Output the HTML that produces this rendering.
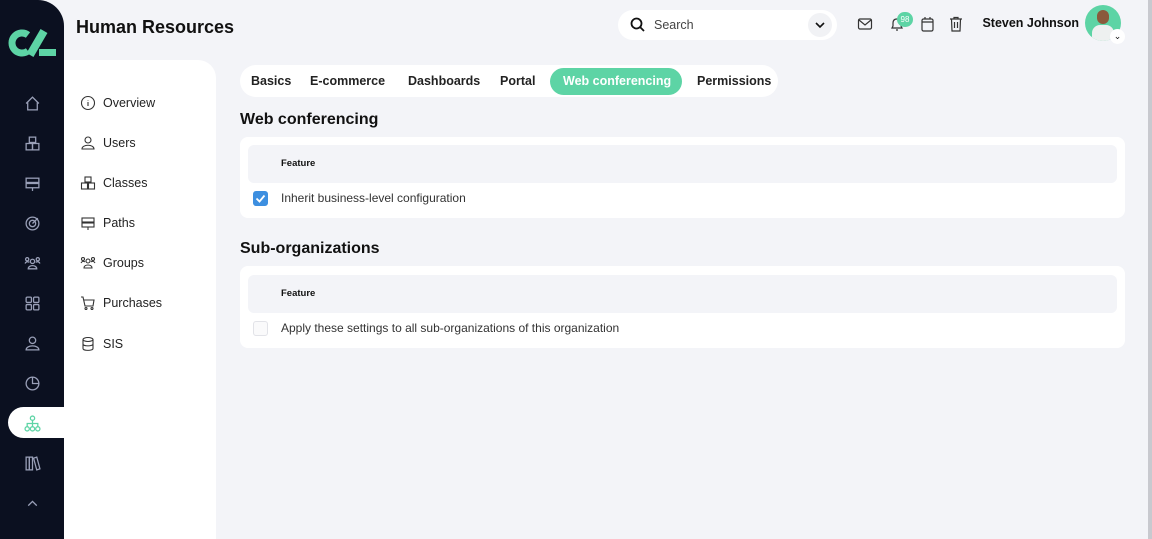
<!DOCTYPE html>
<html><head><style>
*{margin:0;padding:0;box-sizing:border-box}
body{width:1152px;height:539px;overflow:hidden;background:#f3f4f8;font-family:"Liberation Sans",sans-serif;color:#111;position:relative}
.sb{position:absolute;left:0;top:0;width:64px;height:539px;background:#0b1020;border-top-right-radius:26px}
.ic{position:absolute;left:24px;width:17px;height:17px}
.nav{position:absolute;left:64px;top:60px;width:152px;height:479px;background:#fff;border-top-right-radius:18px}
.ni{position:absolute;left:16px;display:flex;align-items:center;font-size:12.5px;color:#222}
.ni svg{width:16px;height:16px;margin-right:7px}
.abs{position:absolute}
.tabs{position:absolute;left:240px;top:65px;width:538px;height:32px;background:#fff;border-radius:16px}
.tab{position:absolute;top:0;line-height:32px;font-size:12.5px;font-weight:bold;color:#222}
.card{position:absolute;left:240px;width:885px;background:#fff;border-radius:8px}
.hd{position:absolute;left:8px;right:8px;top:8px;height:38px;background:#f3f4f8;border-radius:6px;font-size:9.5px;font-weight:bold;line-height:38px;padding-left:33px}
.row{position:absolute;left:41px;font-size:12px;color:#333}
.cb{position:absolute;left:13px;width:15px;height:15px;border-radius:3px}
h2{position:absolute;left:240px;font-size:16px;font-weight:bold;color:#111}
</style></head><body>
<div class="sb">
<svg class="abs" style="left:8px;top:27px" width="50" height="32" viewBox="0 0 50 32"><path d="M20 8 A10 10 0 1 0 20 24" fill="none" stroke="#5dd4a5" stroke-width="7"/><path d="M22 28 L36 4" stroke="#5dd4a5" stroke-width="8"/><rect x="31" y="22" width="17" height="7" fill="#5dd4a5"/></svg>
<svg class="ic" style="top:95px" viewBox="0 0 16 16" fill="none" stroke="#9aa0b8" stroke-width="1.2"><path d="M2 8 L8 2 L14 8 M3.5 7 V14 H12.5 V7"/></svg>
<svg class="ic" style="top:135px" viewBox="0 0 16 16" fill="none" stroke="#9aa0b8" stroke-width="1.2"><rect x="5" y="2" width="6" height="5"/><rect x="2" y="8" width="6" height="6"/><rect x="8" y="8" width="6" height="6"/></svg>
<svg class="ic" style="top:175px" viewBox="0 0 16 16" fill="none" stroke="#9aa0b8" stroke-width="1.2"><rect x="2" y="3" width="12" height="4"/><rect x="2" y="8" width="12" height="4"/><path d="M8 12 V15"/></svg>
<svg class="ic" style="top:215px" viewBox="0 0 16 16" fill="none" stroke="#9aa0b8" stroke-width="1.2"><circle cx="8" cy="8" r="6"/><circle cx="8" cy="8" r="3"/><path d="M8 8 L13 3"/></svg>
<svg class="ic" style="top:255px" viewBox="0 0 16 16" fill="none" stroke="#9aa0b8" stroke-width="1.2"><circle cx="8" cy="6" r="2"/><circle cx="3" cy="4" r="1.5"/><circle cx="13" cy="4" r="1.5"/><path d="M4 13 C4 9 12 9 12 13 Z M1 8 C2 6 4 6 5 7 M15 8 C14 6 12 6 11 7"/></svg>
<svg class="ic" style="top:295px" viewBox="0 0 16 16" fill="none" stroke="#9aa0b8" stroke-width="1.2"><rect x="2" y="2" width="5" height="5" rx="1"/><rect x="9" y="2" width="5" height="5" rx="1"/><rect x="2" y="9" width="5" height="5" rx="1"/><rect x="9" y="9" width="5" height="5" rx="1"/></svg>
<svg class="ic" style="top:335px" viewBox="0 0 16 16" fill="none" stroke="#9aa0b8" stroke-width="1.2"><circle cx="8" cy="5" r="3"/><path d="M2 14 C2 9 14 9 14 14 Z"/></svg>
<svg class="ic" style="top:375px" viewBox="0 0 16 16" fill="none" stroke="#9aa0b8" stroke-width="1.2"><circle cx="8" cy="8" r="6"/><path d="M8 2 V8 H14"/></svg>
<div class="abs" style="left:8px;top:407px;width:56px;height:31px;background:#fff;border-radius:16px 0 0 16px"></div>
<svg class="ic" style="top:415px" viewBox="0 0 16 16" fill="none" stroke="#5dd4a5" stroke-width="1.2"><circle cx="8" cy="3" r="2"/><circle cx="3" cy="13" r="2"/><circle cx="8" cy="13" r="2"/><circle cx="13" cy="13" r="2"/><path d="M8 5 V11 M3 11 V8 H13 V11"/></svg>
<svg class="ic" style="top:455px" viewBox="0 0 16 16" fill="none" stroke="#9aa0b8" stroke-width="1.2"><rect x="2" y="2" width="3" height="12"/><rect x="5" y="2" width="3" height="12"/><path d="M9 3 L12 2 L15 13 L12 14 Z"/></svg>
<svg class="ic" style="top:495px" viewBox="0 0 16 16" fill="none" stroke="#9aa0b8" stroke-width="1.2"><path d="M4 10 L8 6 L12 10"/></svg>
</div>
<div class="abs" style="left:76px;top:17px;font-size:18px;font-weight:bold">Human Resources</div>
<div class="nav">
<div class="ni" style="top:35px"><svg viewBox="0 0 16 16" fill="none" stroke="#333" stroke-width="1.1"><circle cx="8" cy="8" r="6.5"/><path d="M8 7 V11 M8 5 V5.5"/></svg>Overview</div>
<div class="ni" style="top:75px"><svg viewBox="0 0 16 16" fill="none" stroke="#333" stroke-width="1.1"><circle cx="8" cy="5" r="3"/><path d="M2 14 C2 9 14 9 14 14 Z"/></svg>Users</div>
<div class="ni" style="top:115px"><svg viewBox="0 0 16 16" fill="none" stroke="#333" stroke-width="1.1"><rect x="5" y="2" width="6" height="5"/><rect x="1.5" y="8" width="6" height="6"/><rect x="8.5" y="8" width="6" height="6"/></svg>Classes</div>
<div class="ni" style="top:155px"><svg viewBox="0 0 16 16" fill="none" stroke="#333" stroke-width="1.1"><rect x="2" y="3" width="12" height="4"/><rect x="2" y="8" width="12" height="4"/><path d="M8 12 V15"/></svg>Paths</div>
<div class="ni" style="top:195px"><svg viewBox="0 0 16 16" fill="none" stroke="#333" stroke-width="1.1"><circle cx="8" cy="6" r="2"/><circle cx="3" cy="4" r="1.5"/><circle cx="13" cy="4" r="1.5"/><path d="M4 13 C4 9 12 9 12 13 Z M1 8 C2 6 4 6 5 7 M15 8 C14 6 12 6 11 7"/></svg>Groups</div>
<div class="ni" style="top:235px"><svg viewBox="0 0 16 16" fill="none" stroke="#333" stroke-width="1.1"><path d="M1 2 H3 L5 11 H13 L14 5 H4"/><circle cx="6" cy="13.5" r="1"/><circle cx="12" cy="13.5" r="1"/></svg>Purchases</div>
<div class="ni" style="top:276px"><svg viewBox="0 0 16 16" fill="none" stroke="#333" stroke-width="1.1"><ellipse cx="8" cy="3.5" rx="5" ry="2"/><path d="M3 3.5 V12.5 C3 15 13 15 13 12.5 V3.5 M3 8 C3 10.5 13 10.5 13 8"/></svg>SIS</div>
</div>
<div class="abs" style="left:618px;top:10px;width:219px;height:30px;background:#fff;border-radius:15px">
<svg class="abs" style="left:12px;top:7px" width="16" height="16" viewBox="0 0 16 16" fill="none" stroke="#111" stroke-width="1.8"><circle cx="6.5" cy="6.5" r="5"/><path d="M10 10 L14 14"/></svg>
<div class="abs" style="left:36px;top:8px;font-size:12.5px;color:#444">Search</div>
<div class="abs" style="left:190px;top:3px;width:24px;height:24px;border-radius:12px;background:#f1f2f5"></div>
<svg class="abs" style="left:196px;top:10px" width="12" height="10" viewBox="0 0 12 10" fill="none" stroke="#111" stroke-width="1.6"><path d="M2 3 L6 7 L10 3"/></svg>
</div>
<svg class="abs" style="left:857px;top:17px" width="16" height="14" viewBox="0 0 16 14" fill="none" stroke="#333" stroke-width="1.2"><rect x="1.5" y="2" width="13" height="10" rx="1.5"/><path d="M2 3 L8 8 L14 3"/></svg>
<svg class="abs" style="left:889px;top:16px" width="16" height="16" viewBox="0 0 16 16" fill="none" stroke="#333" stroke-width="1.2"><path d="M3 12 H13 L12 10 V7 C12 4 10 3 8 3 C6 3 4 4 4 7 V10 Z M7 14 H9"/></svg>
<div class="abs" style="left:897px;top:12px;width:16px;height:15px;border-radius:8px;background:#5dd4a5;color:#fff;font-size:8px;text-align:center;line-height:15px">98</div>
<svg class="abs" style="left:920px;top:16px" width="15" height="16" viewBox="0 0 15 16" fill="none" stroke="#333" stroke-width="1.2"><rect x="2" y="3" width="11" height="12" rx="1.5"/><path d="M2 6 H13 M5 1 V3 M10 1 V3"/></svg>
<svg class="abs" style="left:949px;top:16px" width="14" height="16" viewBox="0 0 14 16" fill="none" stroke="#333" stroke-width="1.2"><path d="M1 3 H13 M5 3 V1.5 H9 V3 M2.5 3 L3 15 H11 L11.5 3 M5.5 6 V12 M8.5 6 V12"/></svg>
<div class="abs" style="left:1079px;top:16px;font-size:12.5px;font-weight:bold;transform:translateX(-100%);white-space:nowrap">Steven Johnson</div>
<div class="abs" style="left:1085px;top:5px;width:36px;height:36px;border-radius:18px;background:#5dd4a5;overflow:hidden">
<div class="abs" style="left:12px;top:5px;width:12px;height:14px;border-radius:6px;background:#8a5a3c"></div>
<div class="abs" style="left:7px;top:20px;width:22px;height:20px;border-radius:8px 8px 0 0;background:#eef0f0"></div></div>
<div class="abs" style="left:1110px;top:29px;width:15px;height:15px;border-radius:8px;background:#fff;font-size:9px;text-align:center;line-height:14px">⌄</div>
<div class="abs" style="left:1148px;top:0;width:4px;height:539px;background:#c8c9cf"></div>
<div class="tabs">
<div class="tab" style="left:11px">Basics</div>
<div class="tab" style="left:70px">E-commerce</div>
<div class="tab" style="left:168px">Dashboards</div>
<div class="tab" style="left:260px">Portal</div>
<div class="abs" style="left:310px;top:3px;width:132px;height:27px;border-radius:14px;background:#5dd4a5"></div>
<div class="tab" style="left:323px;color:#fff">Web conferencing</div>
<div class="tab" style="left:457px">Permissions</div>
</div>
<h2 style="top:111px">Web conferencing</h2>
<div class="card" style="top:137px;height:81px">
<div class="hd">Feature</div>
<div class="cb" style="top:54px;background:#3d8fe0"><svg width="15" height="15" viewBox="0 0 15 15" fill="none" stroke="#fff" stroke-width="1.8"><path d="M3.5 7.5 L6.5 10.5 L11.5 4.5"/></svg></div>
<div class="row" style="top:54px">Inherit business-level configuration</div>
</div>
<h2 style="top:240px">Sub-organizations</h2>
<div class="card" style="top:266px;height:82px">
<div class="hd" style="top:9px">Feature</div>
<div class="cb" style="top:55px;border:1px solid #e2e3e8;background:#fafafb"></div>
<div class="row" style="top:55px">Apply these settings to all sub-organizations of this organization</div>
</div>
</body></html>
